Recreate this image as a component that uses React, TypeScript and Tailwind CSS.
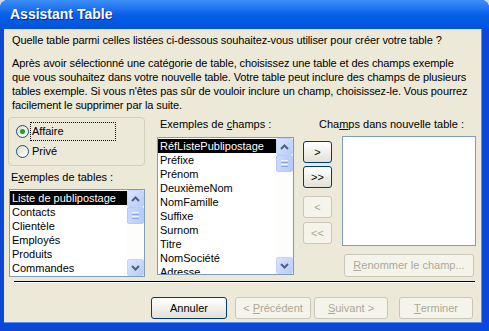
const FONT = { fontFamily: '"Liberation Sans", Arial, sans-serif' };

function Scrollbar() {
  return (
    <div className="flex h-full w-[17px] shrink-0 flex-col bg-[#fdfdfb]">
      <div className="flex h-[17px] items-center justify-center rounded-[2px] border border-[#c3d3fd] bg-gradient-to-br from-[#dbe5fd] to-[#b7cbf9]">
        <svg width="9" height="6" viewBox="0 0 9 6">
          <path d="M1 5 L4.5 1.5 L8 5" fill="none" stroke="#4d6185" strokeWidth="2" />
        </svg>
      </div>
      <div className="flex h-[17px] flex-col items-center justify-center gap-[1px] rounded-[2px] border border-[#b8cbf7] bg-gradient-to-r from-[#c9d8fc] to-[#b6c9f8]">
        <div className="h-px w-[7px] bg-[#eef4fe]" />
        <div className="h-px w-[7px] bg-[#8ca8e6]" />
        <div className="h-px w-[7px] bg-[#eef4fe]" />
        <div className="h-px w-[7px] bg-[#8ca8e6]" />
      </div>
      <div className="flex-1" />
      <div className="flex h-[17px] items-center justify-center rounded-[2px] border border-[#c3d3fd] bg-gradient-to-br from-[#dbe5fd] to-[#b7cbf9]">
        <svg width="9" height="6" viewBox="0 0 9 6">
          <path d="M1 1 L4.5 4.5 L8 1" fill="none" stroke="#4d6185" strokeWidth="2" />
        </svg>
      </div>
    </div>
  );
}

function ListBox({ items, className }: { items: string[]; className: string }) {
  return (
    <div className={`flex overflow-hidden border border-[#7f9db9] bg-white ${className}`}>
      <div className="flex-1 overflow-hidden pt-px">
        {items.map((item, idx) => (
          <div
            key={item}
            className={`h-[14px] whitespace-nowrap pl-[2px] text-[11px] leading-[14px] ${
              idx === 0 ? 'bg-black text-white' : 'text-black'
            }`}
          >
            {item}
          </div>
        ))}
      </div>
      <Scrollbar />
    </div>
  );
}

function Radio({ checked, label, focus }: { checked?: boolean; label: string; focus?: boolean }) {
  return (
    <div className="flex h-[20px] items-center">
      <div className="flex h-[13px] w-[13px] items-center justify-center rounded-full border border-[#1c5180] bg-gradient-to-br from-[#dcdcd4] to-white">
        {checked && <div className="h-[5px] w-[5px] rounded-full bg-[#21a121]" />}
      </div>
      <span
        className={`ml-[1px] h-[19px] pl-px text-[11px] leading-[17px] ${
          focus ? 'w-[86px] border border-dotted border-black' : 'border border-transparent'
        }`}
      >
        {label}
      </span>
    </div>
  );
}

function XpButton({
  children,
  disabled,
  className,
}: {
  children: React.ReactNode;
  disabled?: boolean;
  className: string;
}) {
  return (
    <div
      className={`flex items-center justify-center rounded-[3px] border text-[11px] ${
        disabled
          ? 'border-[#c9c7ba] bg-[#f5f4ea] text-[#aca899]'
          : 'border-[#003c74] bg-gradient-to-b from-white to-[#e3e2d6] text-black'
      } ${className}`}
    >
      {children}
    </div>
  );
}

export default function App() {
  return (
    <div className="h-[331px] w-[489px] overflow-hidden bg-[#d3dae5]" style={FONT}>
      <div className="flex h-[331px] w-[489px] flex-col overflow-hidden rounded-t-[8px] bg-[#0a48d8] pl-[4px] pr-[7px] pb-[8px]">
        {/* title bar */}
        <div className="-ml-[4px] -mr-[7px] flex h-[29px] shrink-0 items-center bg-gradient-to-b from-[#3d8ff7] via-[#0660e9] to-[#0252dd] pl-[10px]">
          <span className="text-[14px] font-bold text-white [text-shadow:1px_1px_0_#0a2c8c]">
            Assistant Table
          </span>
        </div>
        {/* client area */}
        <div className="flex flex-1 flex-col border-b border-r border-[#5a8ef0] bg-[#ece9d8] text-black">
          <div className="mt-[4px] whitespace-nowrap pl-[8px] text-[11px] leading-[14px] tracking-[-0.1px]">
            Quelle table parmi celles listées ci-dessous souhaitez-vous utiliser pour créer votre table ?
          </div>
          <div className="mt-[9px] whitespace-nowrap pl-[8px] text-[11px] leading-[14px] tracking-[-0.1px]">
            <div>Après avoir sélectionné une catégorie de table, choisissez une table et des champs exemple</div>
            <div>que vous souhaitez dans votre nouvelle table. Votre table peut inclure des champs de plusieurs</div>
            <div>tables exemple. Si vous n'êtes pas sûr de vouloir inclure un champ, choisissez-le. Vous pourrez</div>
            <div>facilement le supprimer par la suite.</div>
          </div>

          <div className="mt-[5px] flex">
            {/* column 1 */}
            <div className="ml-[4px] flex w-[137px] flex-col">
              <div className="flex h-[49px] flex-col justify-center rounded-[4px] border border-[#d0d0bf] pl-[7px]">
                <Radio checked focus label="Affaire" />
                <Radio label="Privé" />
              </div>
              <div className="mt-[4px] pl-[3px] text-[11px] leading-[14px]">
                E<span className="underline">x</span>emples de tables :
              </div>
              <ListBox
                className="mt-[5px] ml-px h-[88px] w-[136px]"
                items={['Liste de publipostage', 'Contacts', 'Clientèle', 'Employés', 'Produits', 'Commandes']}
              />
            </div>

            {/* column 2 */}
            <div className="ml-[12px] flex w-[137px] flex-col">
              <div className="pl-[3px] text-[11px] leading-[14px]">
                Exemples de <span className="underline">c</span>hamps :
              </div>
              <ListBox
                className="mt-[6px] h-[138px] w-[137px]"
                items={[
                  'RéfListePublipostage',
                  'Préfixe',
                  'Prénom',
                  'DeuxièmeNom',
                  'NomFamille',
                  'Suffixe',
                  'Surnom',
                  'Titre',
                  'NomSociété',
                  'Adresse',
                ]}
              />
            </div>

            {/* column 3 */}
            <div className="ml-[9px] flex flex-col">
              <div className="pl-[16px] text-[11px] leading-[14px]">
                Cha<span className="underline">m</span>ps dans nouvelle table :
              </div>
              <div className="mt-[5px] flex">
                <div className="mt-[5px] flex w-[29px] flex-col">
                  <XpButton className="h-[22px] w-[29px]">&gt;</XpButton>
                  <XpButton className="mt-[3px] h-[22px] w-[29px]">&gt;&gt;</XpButton>
                  <XpButton disabled className="mt-[8px] h-[22px] w-[29px]">
                    &lt;
                  </XpButton>
                  <XpButton disabled className="mt-[4px] h-[22px] w-[29px]">
                    &lt;&lt;
                  </XpButton>
                </div>
                <div className="ml-[10px] flex flex-col">
                  <div className="h-[110px] w-[134px] border border-[#7f9db9] bg-white" />
                  <XpButton disabled className="mt-[8px] ml-[2px] h-[23px] w-[130px]">
                    <span className="underline">R</span>enommer le champ...
                  </XpButton>
                </div>
              </div>
            </div>
          </div>

          {/* separator */}
          <div className="mt-[4px] ml-[10px] h-[2px] w-[461px] border-t border-b border-t-black border-b-white" />

          {/* footer buttons */}
          <div className="mt-[14px] flex pl-[147px]">
            <XpButton className="h-[22px] w-[76px]">Annuler</XpButton>
            <XpButton disabled className="ml-[8px] h-[22px] w-[76px]">
              &lt;&nbsp;<span className="underline">P</span>récédent
            </XpButton>
            <XpButton disabled className="ml-[3px] h-[22px] w-[74px]">
              <span className="underline">S</span>uivant &gt;
            </XpButton>
            <XpButton disabled className="ml-[11px] h-[22px] w-[74px]">
              <span className="underline">T</span>erminer
            </XpButton>
          </div>
        </div>
      </div>
    </div>
  );
}
